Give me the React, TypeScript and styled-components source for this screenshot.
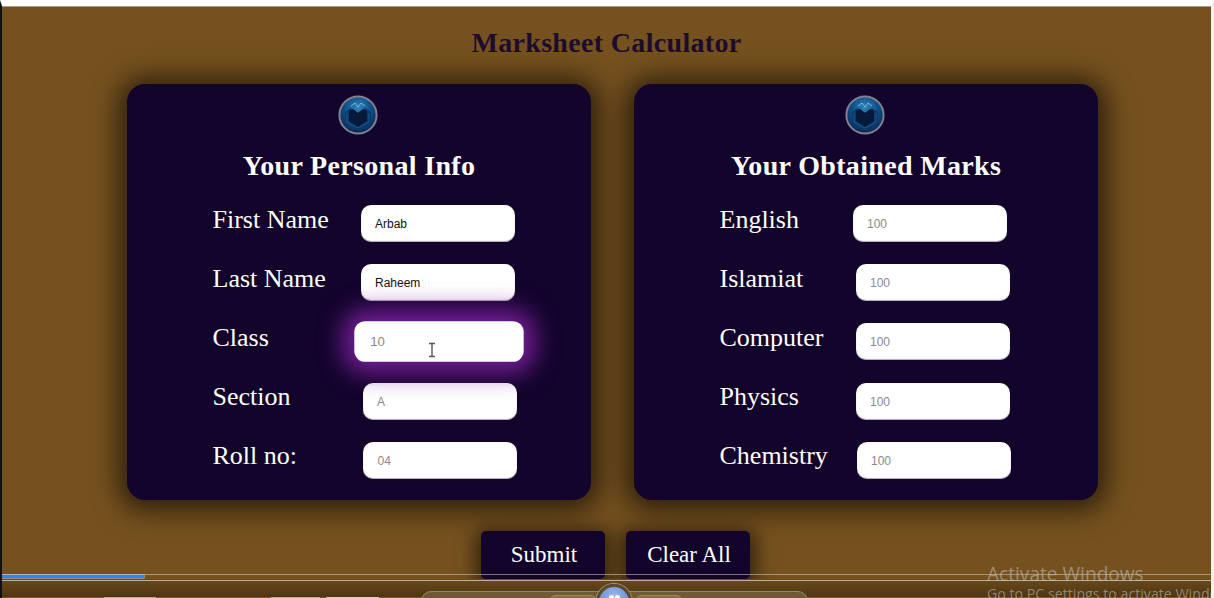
import React from "react";
import styled, { createGlobalStyle } from "styled-components";

const Global = createGlobalStyle`
  html, body { margin: 0; padding: 0; height: 100%; overflow: hidden; background: #fff; }
  #root { height: 100%; }
`;

const Page = styled.div`
  position: relative;
  box-sizing: border-box;
  width: 1214px;
  height: 598px;
  overflow: hidden;
  background: #75511f;
  border-top: 6px solid #fff;
  border-left: 2px solid #111;
  border-right: 3px solid #f7efe9;
  font-family: "Liberation Serif", "Times New Roman", serif;
  display: flex;
  flex-direction: column;
  align-items: center;
  box-shadow: inset 0 1px 0 #a8998a;
`;

const Title = styled.h1`
  margin: 20px 0 0;
  height: 34px;
  line-height: 34px;
  font-size: 28px;
  font-weight: 700;
  letter-spacing: 0.33px;
  color: #1d0d2c;
  text-align: center;
`;

const Cards = styled.div`
  display: flex;
  gap: 43px;
  margin-top: 24px;
  margin-left: 11px;
`;

const Card = styled.section`
  box-sizing: border-box;
  width: 464px;
  height: 416px;
  padding: 11px 0 0 86px;
  background: #13042c;
  border-radius: 18px;
  box-shadow: 0 2px 26px 9px rgba(0, 0, 0, 0.6);
  display: flex;
  flex-direction: column;
`;

const LogoWrap = styled.div`
  width: 40px;
  height: 40px;
  margin-left: 125.5px;
`;

const Heading = styled.h2`
  margin: 15px 0 0 -86px;
  box-sizing: border-box;
  width: 464px;
  height: 32px;
  padding-left: 1px;
  line-height: 32px;
  font-size: 28px;
  font-weight: 700;
  letter-spacing: 0.33px;
  color: #fff;
  text-align: center;
`;

const Rows = styled.div`
  display: flex;
  flex-direction: column;
  gap: 22px;
  margin-top: 23px;
`;

const Row = styled.div`
  display: flex;
  align-items: flex-start;
  height: 37px;
`;

const Label = styled.label<{ $w: number }>`
  width: ${(p) => p.$w}px;
  flex: none;
  font-size: 26px;
  line-height: 30px;
  color: #fff;
`;

const Field = styled.input<{ $shift?: number; $drop?: number; $focused?: boolean }>`
  box-sizing: border-box;
  width: 154px;
  height: 37px;
  margin-left: ${(p) => p.$shift ?? 0}px;
  margin-top: ${(p) => p.$drop ?? 0}px;
  padding: 0 14.5px;
  border: none;
  outline: none;
  border-radius: 10px;
  background: #fff;
  font-family: "Liberation Sans", Arial, sans-serif;
  font-size: 12px;
  color: #111;
  transform: ${(p) => (p.$focused ? "scale(1.1)" : "none")};
  box-shadow: ${(p) =>
    p.$focused
      ? "0 0 22px 10px rgba(128, 34, 162, 0.92)"
      : "inset 0 -1px 1px rgba(90, 80, 110, 0.5)"};
  &::placeholder { color: #8a8a8a; opacity: 1; }
`;

const Actions = styled.div`
  display: flex;
  gap: 21px;
  margin-top: 31px;
  margin-left: 17px;
`;

const Button = styled.button`
  width: 124px;
  height: 48px;
  padding: 0 0 0 3px;
  border: none;
  border-radius: 5px;
  background: #13042c;
  color: #fff;
  font-family: inherit;
  font-size: 23px;
  box-shadow: 0 4px 18px 6px rgba(0, 0, 0, 0.55);
`;

const Cursor = styled.svg`
  position: absolute;
  left: 423px;
  top: 336px;
`;

const PlayerShade = styled.div`
  position: absolute;
  left: 0;
  right: 0;
  bottom: 0;
  height: 19px;
  background: linear-gradient(#6a4a1c, #4d3413);
`;

const BottomStrip = styled.div`
  position: absolute;
  left: 0;
  right: 0;
  bottom: 0;
  height: 1px;
  background: #7a5a20;
`;

const StripChip = styled.div<{ $left: number; $w: number; $tone: string }>`
  position: absolute;
  left: ${(p) => p.$left}px;
  width: ${(p) => p.$w}px;
  top: 0;
  height: 1px;
  background: ${(p) => p.$tone};
`;

const TrackLines = styled.div`
  position: absolute;
  left: -2px;
  right: -3px;
  top: 568px;
  height: 5px;
  border-top: 1px solid rgba(210, 205, 195, 0.55);
  border-bottom: 1px solid rgba(225, 220, 210, 0.7);
`;

const TrackProgress = styled.div`
  position: absolute;
  left: 0;
  top: 0;
  width: 144px;
  height: 3px;
  background: #2f86f2;
  box-shadow: 0 0 0 0.5px #a9d0f5;
`;

const Dock = styled.div`
  position: absolute;
  left: 419px;
  width: 387px;
  top: 585px;
  height: 20px;
  box-sizing: border-box;
  border: 1px solid #8f8674;
  border-radius: 12px;
  background: #6f5a34;
`;

const DockKey = styled.div<{ $left: number; $w: number }>`
  position: absolute;
  left: ${(p) => p.$left}px;
  width: ${(p) => p.$w}px;
  top: 3px;
  height: 14px;
  border: 1px solid #93896f;
  border-radius: 5px 5px 0 0;
  background: #85703f;
`;

const PlayBall = styled.div`
  position: absolute;
  left: 594px;
  top: 578px;
  width: 36px;
  height: 36px;
  box-sizing: border-box;
  border: 3px solid #5e4a2a;
  border-radius: 50%;
  background: radial-gradient(circle at 50% 30%, #9db8e8, #6388d2 70%);
  box-shadow: 0 0 0 1px #9c917b;
  display: flex;
  justify-content: center;
  gap: 1px;
  padding-top: 8px;
`;

const PlayDot = styled.span`
  width: 5px;
  height: 5px;
  border-radius: 50%;
  background: #fff;
`;

const Watermark = styled.div`
  position: absolute;
  left: 985px;
  top: 557px;
  width: 240px;
  white-space: nowrap;
  font-family: "Open Sans", "Noto Sans", sans-serif;
  color: rgba(190, 185, 175, 0.6);
`;

const WatermarkTitle = styled.div`
  font-size: 19.1px;
  line-height: 22px;
`;

const WatermarkLine = styled.div`
  font-size: 14.2px;
  line-height: 18px;
`;

const Logo = ({ id }: { id: string }) => (
  <svg width="40" height="40" viewBox="0 0 40 40">
    <defs>
      <radialGradient id={id} cx="50%" cy="30%" r="68%">
        <stop offset="0" stopColor="#2f86bd" />
        <stop offset="0.5" stopColor="#0e5088" />
        <stop offset="1" stopColor="#0a2a54" />
      </radialGradient>
    </defs>
    <circle cx="20" cy="20" r="18.6" fill={`url(#${id})`} stroke="#827f93" strokeWidth="2" />
    <path d="M7 17 L13 13 L20 18 L27 13 L33 17 V27 L20 34 L7 27 Z" fill="#0c386a" />
    <path d="M11 16 L15 14 L20 18 L25 14 L29 16 V26 L20 32 L11 26 Z" fill="#06193a" />
    <path d="M9 18 V27 L20 33 L31 27 V18" fill="none" stroke="#1c659f" strokeWidth="0.7" />
    <path d="M13 11 L17 8 L20 12 L23 8 L27 11" fill="none" stroke="#7fb6d6" strokeWidth="1" />
  </svg>
);

type RowData = {
  label: string;
  shift: number;
  drop?: number;
  value?: string;
  ph: string;
  focused?: boolean;
};

const personal: RowData[] = [
  { label: "First Name", shift: 0, value: "Arbab", ph: "" },
  { label: "Last Name", shift: 0, value: "Raheem", ph: "" },
  { label: "Class", shift: 1.5, ph: "10", focused: true },
  { label: "Section", shift: 2, drop: 1, ph: "A" },
  { label: "Roll no:", shift: 2.5, drop: 1, ph: "04" },
];

const marks: RowData[] = [
  { label: "English", shift: 0, ph: "100" },
  { label: "Islamiat", shift: 3, ph: "100" },
  { label: "Computer", shift: 3, ph: "100" },
  { label: "Physics", shift: 3, drop: 1, ph: "100" },
  { label: "Chemistry", shift: 4, drop: 1, ph: "100" },
];

const InfoCard = ({
  id,
  title,
  rows,
  labelWidth,
}: {
  id: string;
  title: string;
  rows: RowData[];
  labelWidth: number;
}) => (
  <Card>
    <LogoWrap><Logo id={id} /></LogoWrap>
    <Heading>{title}</Heading>
    <Rows>
      {rows.map((r) => (
        <Row key={r.label}>
          <Label $w={labelWidth}>{r.label}</Label>
          <Field
            $shift={r.shift}
            $drop={r.drop}
            $focused={r.focused}
            defaultValue={r.value}
            placeholder={r.ph}
          />
        </Row>
      ))}
    </Rows>
  </Card>
);

export default function App() {
  return (
    <Page>
      <Global />
      <Title>Marksheet Calculator</Title>
      <Cards>
        <InfoCard id="logo-a" title="Your Personal Info" rows={personal} labelWidth={148} />
        <InfoCard id="logo-b" title="Your Obtained Marks" rows={marks} labelWidth={133} />
      </Cards>
      <Actions>
        <Button>Submit</Button>
        <Button>Clear All</Button>
      </Actions>
      <Cursor width="14" height="16" viewBox="0 0 14 16">
        <path d="M4 1.5 H10 M7 1.5 V14.5 M4 14.5 H10" stroke="#555" strokeWidth="1.4" fill="none" />
      </Cursor>
      <PlayerShade />
      <BottomStrip>
        <StripChip $left={102} $w={52} $tone="#b9ae88" />
        <StripChip $left={269} $w={49} $tone="#b9ae88" />
        <StripChip $left={324} $w={53} $tone="#d8d0b4" />
      </BottomStrip>
      <TrackLines><TrackProgress /></TrackLines>
      <Dock>
        <DockKey $left={128} $w={44} />
        <DockKey $left={214} $w={44} />
      </Dock>
      <PlayBall><PlayDot /><PlayDot /></PlayBall>
      <Watermark>
        <WatermarkTitle>Activate Windows</WatermarkTitle>
        <WatermarkLine>Go to PC settings to activate Windows.</WatermarkLine>
      </Watermark>
    </Page>
  );
}
